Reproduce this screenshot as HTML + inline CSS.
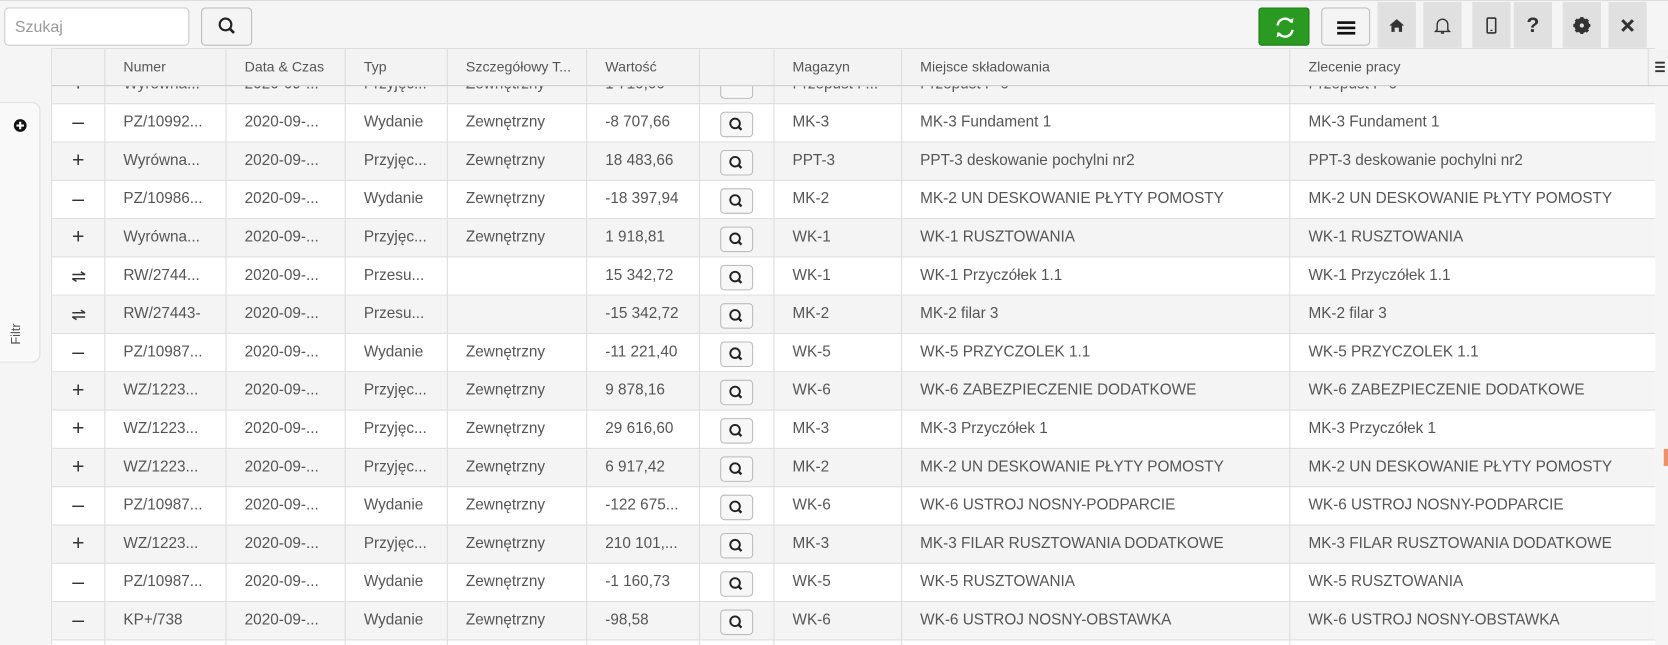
<!DOCTYPE html>
<html><head><meta charset="utf-8"><style>
*{box-sizing:border-box;margin:0;padding:0}
html,body{width:1668px;height:645px;overflow:hidden;background:#f5f5f5}
.wrap{position:absolute;left:0;top:0;width:1568px;height:606px;overflow:hidden;transform:scale(1.06378);transform-origin:0 0;font-family:"Liberation Sans",sans-serif;color:#555}
.top{position:absolute;left:0;top:0;width:1568px;height:46px;background:#f5f5f5;border-top:1px solid #ddd}
.search{position:absolute;left:4px;top:6px;width:174px;height:36px;background:#fff;border:1px solid #ccc;border-radius:4px;font-size:15px;color:#999;padding:9px 9px}
.sbtn{position:absolute;left:189px;top:6px;width:48px;height:36px;background:#f4f4f4;border:1px solid #bbb;border-radius:4px}
.green{position:absolute;left:1183px;top:6px;width:48px;height:36px;background:#2a9a22;border:1px solid #1e7a18;border-radius:3px}
.menu{position:absolute;left:1242px;top:6px;width:46px;height:36px;background:#f4f4f4;border:1px solid #bbb;border-radius:4px}
.ib{position:absolute;top:1px;width:36px;height:44px;background:#e0e0e0;display:flex;align-items:center;justify-content:center;font-weight:bold;font-size:20px;color:#333}
.tab{position:absolute;left:0;top:96px;width:38px;height:245px;background:#f9f9f9;border:1px solid #ddd;border-left:none;border-radius:0 8px 8px 0}
.tab span{position:absolute;left:5px;top:210px;transform:rotate(-90deg);font-size:12px;color:#555}
.grid{position:absolute;left:48px;top:45px;width:1508px;height:561px;overflow:hidden;background:#fff;border-left:1px solid #ddd}
.row{position:absolute;left:0;width:1508px;height:36px;border-bottom:1px solid #ddd;font-size:14.4px}
.row.g{background:#f4f4f4}
.c{position:absolute;top:0;height:36px;line-height:35px;border-right:1px solid #ddd;padding-left:17px;white-space:nowrap;overflow:hidden}
.hdr{position:absolute;left:0;top:0;width:1508px;height:36px;background:#f3f3f3;border-bottom:1px solid #ccc;border-top:1px solid #ddd;font-size:13.3px;z-index:2}
.hdr .c{height:34px;line-height:33px}
.ic{padding-left:0;text-align:center;font-size:20px;color:#333}
.mag{padding-left:0}
.mag div{margin:7px 0 0 19px;width:31px;height:24px;border:1px solid #bbb;border-radius:4px;background:#f7f7f7}
</style></head><body><div class="wrap">
<div class="top">
<div class="search">Szukaj</div>
<div class="sbtn"><svg width="48" height="36" viewBox="0 0 48 36"><circle cx="22" cy="15" r="5.5" fill="none" stroke="#222" stroke-width="2"/><line x1="26" y1="19" x2="30" y2="23" stroke="#222" stroke-width="2.5"/></svg></div>
<div class="green"><svg width="48" height="36" viewBox="0 0 48 36"><path d="M17 16a7 7 0 0 1 13-3" fill="none" stroke="#fff" stroke-width="2.2"/><path d="M31 20a7 7 0 0 1-13 3" fill="none" stroke="#fff" stroke-width="2.2"/><path d="M27 11l4 3 1-5z" fill="#fff"/><path d="M21 25l-4-3-1 5z" fill="#fff"/></svg></div>
<div class="menu"><svg width="46" height="36" viewBox="0 0 46 36"><rect x="14" y="12" width="17" height="2.5" fill="#111"/><rect x="14" y="17" width="17" height="2.5" fill="#111"/><rect x="14" y="22" width="17" height="2.5" fill="#111"/></svg></div>
<div class="ib" style="left:1295px"><svg width="16" height="16" viewBox="0 0 16 16"><path d="M1 8L8 2l7 6h-2v6H10v-4H6v4H3V8z" fill="#333"/></svg></div>
<div class="ib" style="left:1338px"><svg width="16" height="18" viewBox="0 0 16 18"><path d="M3 13V8a5 5 0 0 1 10 0v5l1.5 1.5h-13z" fill="none" stroke="#333" stroke-width="1.3"/><path d="M6.5 16h3" stroke="#333" stroke-width="1.5"/></svg></div>
<div class="ib" style="left:1384px"><svg width="12" height="18" viewBox="0 0 12 18"><rect x="2" y="2" width="8" height="14" rx="1" fill="none" stroke="#333" stroke-width="1.5"/><rect x="5" y="13" width="2" height="1.2" fill="#333"/></svg></div>
<div class="ib" style="left:1423px">?</div>
<div class="ib" style="left:1469px"><svg width="18" height="18" viewBox="0 0 18 18"><circle cx="9" cy="9" r="5.5" fill="none" stroke="#333" stroke-width="3"/><g stroke="#333" stroke-width="3"><line x1="9" y1="1" x2="9" y2="17"/><line x1="1" y1="9" x2="17" y2="9"/><line x1="3.3" y1="3.3" x2="14.7" y2="14.7"/><line x1="14.7" y1="3.3" x2="3.3" y2="14.7"/></g><circle cx="9" cy="9" r="2" fill="#e0e0e0"/></svg></div>
<div class="ib" style="left:1512px"><svg width="14" height="14" viewBox="0 0 14 14"><path d="M2 2l10 10M12 2L2 12" stroke="#333" stroke-width="2.8"/></svg></div>
</div>
<div class="tab"><svg style="position:absolute;left:12px;top:14px" width="14" height="14" viewBox="0 0 14 14"><circle cx="7" cy="7" r="6" fill="#111"/><path d="M7 3.5v7M3.5 7h7" stroke="#fff" stroke-width="2"/></svg><span>Filtr</span></div>
<div class="grid">
<div class="hdr">
<div class="c" style="left:0;width:50px"></div>
<div class="c" style="left:50px;width:114px">Numer</div>
<div class="c" style="left:164px;width:112px">Data &amp; Czas</div>
<div class="c" style="left:276px;width:96px">Typ</div>
<div class="c" style="left:372px;width:131px">Szczegółowy T...</div>
<div class="c" style="left:503px;width:106px">Wartość</div>
<div class="c" style="left:609px;width:70px"></div>
<div class="c" style="left:679px;width:120px">Magazyn</div>
<div class="c" style="left:799px;width:365px">Miejsce składowania</div>
<div class="c" style="left:1164px;width:337px">Zlecenie pracy</div>
</div>
<div class="row g" style="top:17px"><div class="c ic" style="left:0;width:50px">+</div><div class="c" style="left:50px;width:114px">Wyrówna...</div><div class="c" style="left:164px;width:112px">2020-09-...</div><div class="c" style="left:276px;width:96px">Przyjęc...</div><div class="c" style="left:372px;width:131px">Zewnętrzny</div><div class="c" style="left:503px;width:106px">1 710,00</div><div class="c mag" style="left:609px;width:70px"><div></div></div><div class="c" style="left:679px;width:120px">Przepust P...</div><div class="c" style="left:799px;width:365px">Przepust P-6</div><div class="c" style="left:1164px;width:344px">Przepust P-6</div></div>
<div class="row" style="top:53px"><div class="c ic" style="left:0;width:50px">–</div><div class="c" style="left:50px;width:114px">PZ/10992...</div><div class="c" style="left:164px;width:112px">2020-09-...</div><div class="c" style="left:276px;width:96px">Wydanie</div><div class="c" style="left:372px;width:131px">Zewnętrzny</div><div class="c" style="left:503px;width:106px">-8 707,66</div><div class="c mag" style="left:609px;width:70px"><div><svg width="29" height="22" viewBox="0 0 29 22"><circle cx="13" cy="10" r="4.5" fill="none" stroke="#222" stroke-width="1.8"/><line x1="16" y1="13" x2="19" y2="16" stroke="#222" stroke-width="2.2"/></svg></div></div><div class="c" style="left:679px;width:120px">MK-3</div><div class="c" style="left:799px;width:365px">MK-3 Fundament 1</div><div class="c" style="left:1164px;width:344px">MK-3 Fundament 1</div></div>
<div class="row g" style="top:89px"><div class="c ic" style="left:0;width:50px">+</div><div class="c" style="left:50px;width:114px">Wyrówna...</div><div class="c" style="left:164px;width:112px">2020-09-...</div><div class="c" style="left:276px;width:96px">Przyjęc...</div><div class="c" style="left:372px;width:131px">Zewnętrzny</div><div class="c" style="left:503px;width:106px">18 483,66</div><div class="c mag" style="left:609px;width:70px"><div><svg width="29" height="22" viewBox="0 0 29 22"><circle cx="13" cy="10" r="4.5" fill="none" stroke="#222" stroke-width="1.8"/><line x1="16" y1="13" x2="19" y2="16" stroke="#222" stroke-width="2.2"/></svg></div></div><div class="c" style="left:679px;width:120px">PPT-3</div><div class="c" style="left:799px;width:365px">PPT-3 deskowanie pochylni nr2</div><div class="c" style="left:1164px;width:344px">PPT-3 deskowanie pochylni nr2</div></div>
<div class="row" style="top:125px"><div class="c ic" style="left:0;width:50px">–</div><div class="c" style="left:50px;width:114px">PZ/10986...</div><div class="c" style="left:164px;width:112px">2020-09-...</div><div class="c" style="left:276px;width:96px">Wydanie</div><div class="c" style="left:372px;width:131px">Zewnętrzny</div><div class="c" style="left:503px;width:106px">-18 397,94</div><div class="c mag" style="left:609px;width:70px"><div><svg width="29" height="22" viewBox="0 0 29 22"><circle cx="13" cy="10" r="4.5" fill="none" stroke="#222" stroke-width="1.8"/><line x1="16" y1="13" x2="19" y2="16" stroke="#222" stroke-width="2.2"/></svg></div></div><div class="c" style="left:679px;width:120px">MK-2</div><div class="c" style="left:799px;width:365px">MK-2 UN DESKOWANIE PŁYTY POMOSTY</div><div class="c" style="left:1164px;width:344px">MK-2 UN DESKOWANIE PŁYTY POMOSTY</div></div>
<div class="row g" style="top:161px"><div class="c ic" style="left:0;width:50px">+</div><div class="c" style="left:50px;width:114px">Wyrówna...</div><div class="c" style="left:164px;width:112px">2020-09-...</div><div class="c" style="left:276px;width:96px">Przyjęc...</div><div class="c" style="left:372px;width:131px">Zewnętrzny</div><div class="c" style="left:503px;width:106px">1 918,81</div><div class="c mag" style="left:609px;width:70px"><div><svg width="29" height="22" viewBox="0 0 29 22"><circle cx="13" cy="10" r="4.5" fill="none" stroke="#222" stroke-width="1.8"/><line x1="16" y1="13" x2="19" y2="16" stroke="#222" stroke-width="2.2"/></svg></div></div><div class="c" style="left:679px;width:120px">WK-1</div><div class="c" style="left:799px;width:365px">WK-1 RUSZTOWANIA</div><div class="c" style="left:1164px;width:344px">WK-1 RUSZTOWANIA</div></div>
<div class="row" style="top:197px"><div class="c ic" style="left:0;width:50px"><svg width="16" height="12" viewBox="0 0 16 12" style="margin-top:12px"><path d="M2 4h12M10 1.5l4 2.5M2 8h12M6 10.5L2 8" stroke="#333" stroke-width="1.4" fill="none"/></svg></div><div class="c" style="left:50px;width:114px">RW/2744...</div><div class="c" style="left:164px;width:112px">2020-09-...</div><div class="c" style="left:276px;width:96px">Przesu...</div><div class="c" style="left:372px;width:131px"></div><div class="c" style="left:503px;width:106px">15 342,72</div><div class="c mag" style="left:609px;width:70px"><div><svg width="29" height="22" viewBox="0 0 29 22"><circle cx="13" cy="10" r="4.5" fill="none" stroke="#222" stroke-width="1.8"/><line x1="16" y1="13" x2="19" y2="16" stroke="#222" stroke-width="2.2"/></svg></div></div><div class="c" style="left:679px;width:120px">WK-1</div><div class="c" style="left:799px;width:365px">WK-1 Przyczółek 1.1</div><div class="c" style="left:1164px;width:344px">WK-1 Przyczółek 1.1</div></div>
<div class="row g" style="top:233px"><div class="c ic" style="left:0;width:50px"><svg width="16" height="12" viewBox="0 0 16 12" style="margin-top:12px"><path d="M2 4h12M10 1.5l4 2.5M2 8h12M6 10.5L2 8" stroke="#333" stroke-width="1.4" fill="none"/></svg></div><div class="c" style="left:50px;width:114px">RW/27443-</div><div class="c" style="left:164px;width:112px">2020-09-...</div><div class="c" style="left:276px;width:96px">Przesu...</div><div class="c" style="left:372px;width:131px"></div><div class="c" style="left:503px;width:106px">-15 342,72</div><div class="c mag" style="left:609px;width:70px"><div><svg width="29" height="22" viewBox="0 0 29 22"><circle cx="13" cy="10" r="4.5" fill="none" stroke="#222" stroke-width="1.8"/><line x1="16" y1="13" x2="19" y2="16" stroke="#222" stroke-width="2.2"/></svg></div></div><div class="c" style="left:679px;width:120px">MK-2</div><div class="c" style="left:799px;width:365px">MK-2 filar 3</div><div class="c" style="left:1164px;width:344px">MK-2 filar 3</div></div>
<div class="row" style="top:269px"><div class="c ic" style="left:0;width:50px">–</div><div class="c" style="left:50px;width:114px">PZ/10987...</div><div class="c" style="left:164px;width:112px">2020-09-...</div><div class="c" style="left:276px;width:96px">Wydanie</div><div class="c" style="left:372px;width:131px">Zewnętrzny</div><div class="c" style="left:503px;width:106px">-11 221,40</div><div class="c mag" style="left:609px;width:70px"><div><svg width="29" height="22" viewBox="0 0 29 22"><circle cx="13" cy="10" r="4.5" fill="none" stroke="#222" stroke-width="1.8"/><line x1="16" y1="13" x2="19" y2="16" stroke="#222" stroke-width="2.2"/></svg></div></div><div class="c" style="left:679px;width:120px">WK-5</div><div class="c" style="left:799px;width:365px">WK-5 PRZYCZOLEK 1.1</div><div class="c" style="left:1164px;width:344px">WK-5 PRZYCZOLEK 1.1</div></div>
<div class="row g" style="top:305px"><div class="c ic" style="left:0;width:50px">+</div><div class="c" style="left:50px;width:114px">WZ/1223...</div><div class="c" style="left:164px;width:112px">2020-09-...</div><div class="c" style="left:276px;width:96px">Przyjęc...</div><div class="c" style="left:372px;width:131px">Zewnętrzny</div><div class="c" style="left:503px;width:106px">9 878,16</div><div class="c mag" style="left:609px;width:70px"><div><svg width="29" height="22" viewBox="0 0 29 22"><circle cx="13" cy="10" r="4.5" fill="none" stroke="#222" stroke-width="1.8"/><line x1="16" y1="13" x2="19" y2="16" stroke="#222" stroke-width="2.2"/></svg></div></div><div class="c" style="left:679px;width:120px">WK-6</div><div class="c" style="left:799px;width:365px">WK-6 ZABEZPIECZENIE DODATKOWE</div><div class="c" style="left:1164px;width:344px">WK-6 ZABEZPIECZENIE DODATKOWE</div></div>
<div class="row" style="top:341px"><div class="c ic" style="left:0;width:50px">+</div><div class="c" style="left:50px;width:114px">WZ/1223...</div><div class="c" style="left:164px;width:112px">2020-09-...</div><div class="c" style="left:276px;width:96px">Przyjęc...</div><div class="c" style="left:372px;width:131px">Zewnętrzny</div><div class="c" style="left:503px;width:106px">29 616,60</div><div class="c mag" style="left:609px;width:70px"><div><svg width="29" height="22" viewBox="0 0 29 22"><circle cx="13" cy="10" r="4.5" fill="none" stroke="#222" stroke-width="1.8"/><line x1="16" y1="13" x2="19" y2="16" stroke="#222" stroke-width="2.2"/></svg></div></div><div class="c" style="left:679px;width:120px">MK-3</div><div class="c" style="left:799px;width:365px">MK-3 Przyczółek 1</div><div class="c" style="left:1164px;width:344px">MK-3 Przyczółek 1</div></div>
<div class="row g" style="top:377px"><div class="c ic" style="left:0;width:50px">+</div><div class="c" style="left:50px;width:114px">WZ/1223...</div><div class="c" style="left:164px;width:112px">2020-09-...</div><div class="c" style="left:276px;width:96px">Przyjęc...</div><div class="c" style="left:372px;width:131px">Zewnętrzny</div><div class="c" style="left:503px;width:106px">6 917,42</div><div class="c mag" style="left:609px;width:70px"><div><svg width="29" height="22" viewBox="0 0 29 22"><circle cx="13" cy="10" r="4.5" fill="none" stroke="#222" stroke-width="1.8"/><line x1="16" y1="13" x2="19" y2="16" stroke="#222" stroke-width="2.2"/></svg></div></div><div class="c" style="left:679px;width:120px">MK-2</div><div class="c" style="left:799px;width:365px">MK-2 UN DESKOWANIE PŁYTY POMOSTY</div><div class="c" style="left:1164px;width:344px">MK-2 UN DESKOWANIE PŁYTY POMOSTY</div></div>
<div class="row" style="top:413px"><div class="c ic" style="left:0;width:50px">–</div><div class="c" style="left:50px;width:114px">PZ/10987...</div><div class="c" style="left:164px;width:112px">2020-09-...</div><div class="c" style="left:276px;width:96px">Wydanie</div><div class="c" style="left:372px;width:131px">Zewnętrzny</div><div class="c" style="left:503px;width:106px">-122 675...</div><div class="c mag" style="left:609px;width:70px"><div><svg width="29" height="22" viewBox="0 0 29 22"><circle cx="13" cy="10" r="4.5" fill="none" stroke="#222" stroke-width="1.8"/><line x1="16" y1="13" x2="19" y2="16" stroke="#222" stroke-width="2.2"/></svg></div></div><div class="c" style="left:679px;width:120px">WK-6</div><div class="c" style="left:799px;width:365px">WK-6 USTROJ NOSNY-PODPARCIE</div><div class="c" style="left:1164px;width:344px">WK-6 USTROJ NOSNY-PODPARCIE</div></div>
<div class="row g" style="top:449px"><div class="c ic" style="left:0;width:50px">+</div><div class="c" style="left:50px;width:114px">WZ/1223...</div><div class="c" style="left:164px;width:112px">2020-09-...</div><div class="c" style="left:276px;width:96px">Przyjęc...</div><div class="c" style="left:372px;width:131px">Zewnętrzny</div><div class="c" style="left:503px;width:106px">210 101,...</div><div class="c mag" style="left:609px;width:70px"><div><svg width="29" height="22" viewBox="0 0 29 22"><circle cx="13" cy="10" r="4.5" fill="none" stroke="#222" stroke-width="1.8"/><line x1="16" y1="13" x2="19" y2="16" stroke="#222" stroke-width="2.2"/></svg></div></div><div class="c" style="left:679px;width:120px">MK-3</div><div class="c" style="left:799px;width:365px">MK-3 FILAR RUSZTOWANIA DODATKOWE</div><div class="c" style="left:1164px;width:344px">MK-3 FILAR RUSZTOWANIA DODATKOWE</div></div>
<div class="row" style="top:485px"><div class="c ic" style="left:0;width:50px">–</div><div class="c" style="left:50px;width:114px">PZ/10987...</div><div class="c" style="left:164px;width:112px">2020-09-...</div><div class="c" style="left:276px;width:96px">Wydanie</div><div class="c" style="left:372px;width:131px">Zewnętrzny</div><div class="c" style="left:503px;width:106px">-1 160,73</div><div class="c mag" style="left:609px;width:70px"><div><svg width="29" height="22" viewBox="0 0 29 22"><circle cx="13" cy="10" r="4.5" fill="none" stroke="#222" stroke-width="1.8"/><line x1="16" y1="13" x2="19" y2="16" stroke="#222" stroke-width="2.2"/></svg></div></div><div class="c" style="left:679px;width:120px">WK-5</div><div class="c" style="left:799px;width:365px">WK-5 RUSZTOWANIA</div><div class="c" style="left:1164px;width:344px">WK-5 RUSZTOWANIA</div></div>
<div class="row g" style="top:521px"><div class="c ic" style="left:0;width:50px">–</div><div class="c" style="left:50px;width:114px">KP+/738</div><div class="c" style="left:164px;width:112px">2020-09-...</div><div class="c" style="left:276px;width:96px">Wydanie</div><div class="c" style="left:372px;width:131px">Zewnętrzny</div><div class="c" style="left:503px;width:106px">-98,58</div><div class="c mag" style="left:609px;width:70px"><div><svg width="29" height="22" viewBox="0 0 29 22"><circle cx="13" cy="10" r="4.5" fill="none" stroke="#222" stroke-width="1.8"/><line x1="16" y1="13" x2="19" y2="16" stroke="#222" stroke-width="2.2"/></svg></div></div><div class="c" style="left:679px;width:120px">WK-6</div><div class="c" style="left:799px;width:365px">WK-6 USTROJ NOSNY-OBSTAWKA</div><div class="c" style="left:1164px;width:344px">WK-6 USTROJ NOSNY-OBSTAWKA</div></div>
<div class="row" style="top:557px"><div class="c ic" style="left:0;width:50px"></div><div class="c" style="left:50px;width:114px"></div><div class="c" style="left:164px;width:112px"></div><div class="c" style="left:276px;width:96px"></div><div class="c" style="left:372px;width:131px"></div><div class="c" style="left:503px;width:106px"></div><div class="c mag" style="left:609px;width:70px"><div></div></div><div class="c" style="left:679px;width:120px"></div><div class="c" style="left:799px;width:365px"></div><div class="c" style="left:1164px;width:344px"></div></div>
</div>
<div style="position:absolute;left:1549px;top:46px;width:19px;height:35px;background:#f3f3f3;border-left:1px solid #ddd;border-bottom:1px solid #ccc"><svg width="18" height="34" viewBox="0 0 18 34"><rect x="4" y="12" width="11" height="1.8" fill="#333"/><rect x="4" y="16" width="11" height="1.8" fill="#333"/><rect x="4" y="20" width="11" height="1.8" fill="#333"/></svg></div>
<div style="position:absolute;left:1564px;top:422px;width:4px;height:16px;background:#f0906a"></div>
</div></body></html>
